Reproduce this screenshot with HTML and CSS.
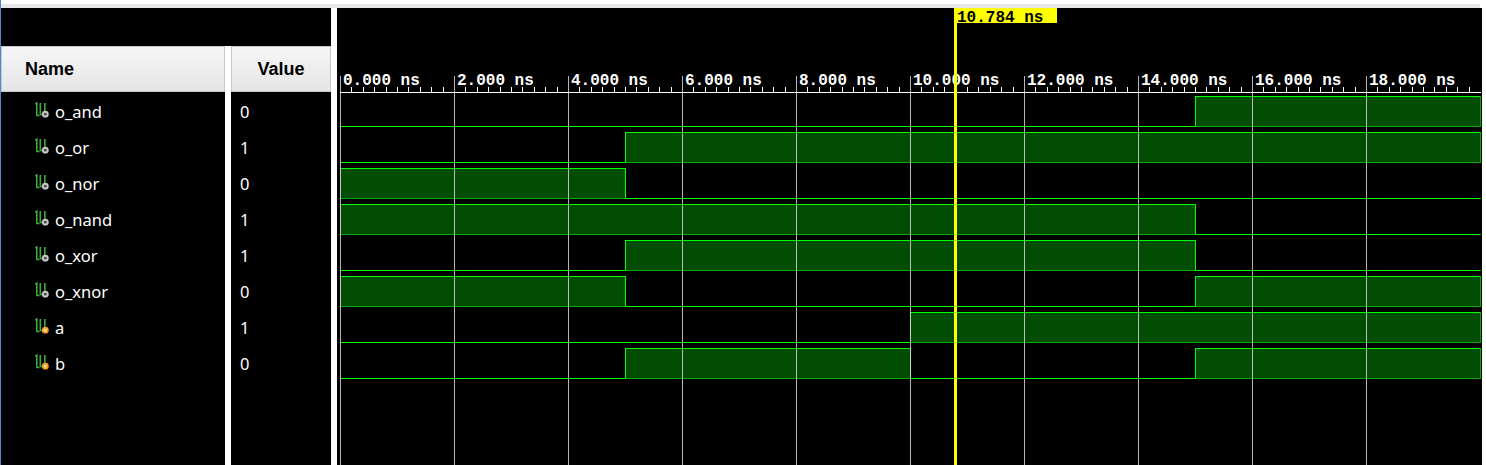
FILE: index.html
```html
<!DOCTYPE html>
<html>
<head>
<meta charset="utf-8">
<title>Waveform</title>
<link rel="stylesheet" href="styles.css">
</head>
<body>
<div class="app">
  <div class="topband"></div>
  <div class="main">
    <div class="names-panel">
      <div class="panel-top"></div>
      <div class="cols">
        <div class="col col-name">
          <div class="hdr">Name</div>
          <div class="row"><svg class="ico" viewBox="0 0 15 16" width="15" height="16"><path d="M0.3 2.3L1.8 1V13.5H4.5" class="ico-g"/><path d="M5.3 1V12.5H9.8V1" class="ico-g"/><circle cx="10.3" cy="12.2" r="3.4" class="ico-out"/><circle cx="10.3" cy="12.2" r="1.4" class="ico-dot"/></svg><span>o_and</span></div>
          <div class="row"><svg class="ico" viewBox="0 0 15 16" width="15" height="16"><path d="M0.3 2.3L1.8 1V13.5H4.5" class="ico-g"/><path d="M5.3 1V12.5H9.8V1" class="ico-g"/><circle cx="10.3" cy="12.2" r="3.4" class="ico-out"/><circle cx="10.3" cy="12.2" r="1.4" class="ico-dot"/></svg><span>o_or</span></div>
          <div class="row"><svg class="ico" viewBox="0 0 15 16" width="15" height="16"><path d="M0.3 2.3L1.8 1V13.5H4.5" class="ico-g"/><path d="M5.3 1V12.5H9.8V1" class="ico-g"/><circle cx="10.3" cy="12.2" r="3.4" class="ico-out"/><circle cx="10.3" cy="12.2" r="1.4" class="ico-dot"/></svg><span>o_nor</span></div>
          <div class="row"><svg class="ico" viewBox="0 0 15 16" width="15" height="16"><path d="M0.3 2.3L1.8 1V13.5H4.5" class="ico-g"/><path d="M5.3 1V12.5H9.8V1" class="ico-g"/><circle cx="10.3" cy="12.2" r="3.4" class="ico-out"/><circle cx="10.3" cy="12.2" r="1.4" class="ico-dot"/></svg><span>o_nand</span></div>
          <div class="row"><svg class="ico" viewBox="0 0 15 16" width="15" height="16"><path d="M0.3 2.3L1.8 1V13.5H4.5" class="ico-g"/><path d="M5.3 1V12.5H9.8V1" class="ico-g"/><circle cx="10.3" cy="12.2" r="3.4" class="ico-out"/><circle cx="10.3" cy="12.2" r="1.4" class="ico-dot"/></svg><span>o_xor</span></div>
          <div class="row"><svg class="ico" viewBox="0 0 15 16" width="15" height="16"><path d="M0.3 2.3L1.8 1V13.5H4.5" class="ico-g"/><path d="M5.3 1V12.5H9.8V1" class="ico-g"/><circle cx="10.3" cy="12.2" r="3.4" class="ico-out"/><circle cx="10.3" cy="12.2" r="1.4" class="ico-dot"/></svg><span>o_xnor</span></div>
          <div class="row"><svg class="ico" viewBox="0 0 15 16" width="15" height="16"><path d="M0.3 2.3L1.8 1V13.5H4.5" class="ico-g"/><path d="M5.3 1V12.5H9.8V1" class="ico-g"/><circle cx="10.3" cy="12.2" r="3.4" class="ico-in"/><path d="M9.1 10.9L10.3 13.4L11.5 10.9" class="ico-v"/></svg><span>a</span></div>
          <div class="row"><svg class="ico" viewBox="0 0 15 16" width="15" height="16"><path d="M0.3 2.3L1.8 1V13.5H4.5" class="ico-g"/><path d="M5.3 1V12.5H9.8V1" class="ico-g"/><circle cx="10.3" cy="12.2" r="3.4" class="ico-in"/><path d="M9.1 10.9L10.3 13.4L11.5 10.9" class="ico-v"/></svg><span>b</span></div>
        </div>
        <div class="col col-value">
          <div class="hdr">Value</div>
          <div class="row">0</div>
          <div class="row">1</div>
          <div class="row">0</div>
          <div class="row">1</div>
          <div class="row">1</div>
          <div class="row">0</div>
          <div class="row">1</div>
          <div class="row">0</div>
        </div>
      </div>
    </div>
    <div class="divider"></div>
    <div class="wave">
      <svg class="wave-svg" width="1145" height="457" viewBox="337 8 1145 457">
        <g class="ruler-text">
          <text x="343" y="85">0.000 ns</text>
          <text x="457" y="85">2.000 ns</text>
          <text x="571" y="85">4.000 ns</text>
          <text x="685" y="85">6.000 ns</text>
          <text x="799" y="85">8.000 ns</text>
          <text x="913" y="85">10.000 ns</text>
          <text x="1027" y="85">12.000 ns</text>
          <text x="1141" y="85">14.000 ns</text>
          <text x="1255" y="85">16.000 ns</text>
          <text x="1369" y="85">18.000 ns</text>
        </g>
        <rect x="340" y="92" width="1141" height="1" class="ruler-line"/>
        <path class="minor" d="M351.5 87V92M363.5 87V92M374.5 87V92M386.5 87V92M397.5 87V92M408.5 87V92M420.5 87V92M431.5 87V92M443.5 87V92
        M465.5 87V92M477.5 87V92M488.5 87V92M500.5 87V92M511.5 87V92M522.5 87V92M534.5 87V92M545.5 87V92M557.5 87V92
        M579.5 87V92M591.5 87V92M602.5 87V92M614.5 87V92M625.5 87V92M636.5 87V92M648.5 87V92M659.5 87V92M671.5 87V92
        M693.5 87V92M705.5 87V92M716.5 87V92M728.5 87V92M739.5 87V92M750.5 87V92M762.5 87V92M773.5 87V92M785.5 87V92
        M807.5 87V92M819.5 87V92M830.5 87V92M842.5 87V92M853.5 87V92M864.5 87V92M876.5 87V92M887.5 87V92M899.5 87V92
        M921.5 87V92M933.5 87V92M944.5 87V92M956.5 87V92M967.5 87V92M978.5 87V92M990.5 87V92M1001.5 87V92M1013.5 87V92
        M1035.5 87V92M1047.5 87V92M1058.5 87V92M1070.5 87V92M1081.5 87V92M1092.5 87V92M1104.5 87V92M1115.5 87V92M1127.5 87V92
        M1149.5 87V92M1161.5 87V92M1172.5 87V92M1184.5 87V92M1195.5 87V92M1206.5 87V92M1218.5 87V92M1229.5 87V92M1241.5 87V92
        M1263.5 87V92M1275.5 87V92M1286.5 87V92M1298.5 87V92M1309.5 87V92M1320.5 87V92M1332.5 87V92M1343.5 87V92M1355.5 87V92
        M1377.5 87V92M1389.5 87V92M1400.5 87V92M1412.5 87V92M1423.5 87V92M1434.5 87V92M1446.5 87V92M1457.5 87V92M1469.5 87V92"/>

        <g class="hi">
          <rect x="1195.5" y="96.5" width="285" height="30"/>
          <rect x="625.5" y="132.5" width="855" height="30"/>
          <rect x="340.5" y="168.5" width="285" height="30"/>
          <rect x="340.5" y="204.5" width="855" height="30"/>
          <rect x="625.5" y="240.5" width="570" height="30"/>
          <rect x="340.5" y="276.5" width="285" height="30"/>
          <rect x="1195.5" y="276.5" width="285" height="30"/>
          <rect x="910.5" y="312.5" width="570" height="30"/>
          <rect x="625.5" y="348.5" width="285" height="30"/>
          <rect x="1195.5" y="348.5" width="285" height="30"/>
        </g>
        <g class="trace">
          <path d="M340.5 126.5H1195.5V96.5H1480.5"/>
          <path d="M340.5 162.5H625.5V132.5H1480.5"/>
          <path d="M340.5 168.5H625.5V198.5H1480.5"/>
          <path d="M340.5 204.5H1195.5V234.5H1480.5"/>
          <path d="M340.5 270.5H625.5V240.5H1195.5V270.5H1480.5"/>
          <path d="M340.5 276.5H625.5V306.5H1195.5V276.5H1480.5"/>
          <path d="M340.5 342.5H910.5V312.5H1480.5"/>
          <path d="M340.5 378.5H625.5V348.5H910.5V378.5H1195.5V348.5H1480.5"/>
        </g>
        <path class="grid" d="M340.5 76V465M454.5 76V465M568.5 76V465M682.5 76V465M796.5 76V465M910.5 76V465M1024.5 76V465M1138.5 76V465M1252.5 76V465M1366.5 76V465"/>
        <rect x="954" y="8" width="3" height="457" class="cursor"/>
        <rect x="955" y="8" width="102" height="15" class="cursor"/>
        <text x="957" y="22" class="cursor-text">10.784 ns</text>
      </svg>
    </div>
  </div>
</div>
</body>
</html>
```

FILE: styles.css
```css
html, body {
  margin: 0;
  padding: 0;
  background: #ffffff;
}

.app {
  width: 1486px;
  height: 465px;
  box-sizing: border-box;
  border-left: 1px solid #4f86d6;
  background: #ffffff;
  display: flex;
  flex-direction: column;
  overflow: hidden;
}

.topband {
  height: 4px;
  margin-top: 4px;
  margin-right: 6px;
  background: #e6e6e6;
  flex: none;
}

.main {
  display: flex;
  height: 457px;
  flex: none;
}

.names-panel {
  width: 330px;
  display: flex;
  flex-direction: column;
  background: #000000;
  flex: none;
}

.panel-top {
  height: 38px;
  flex: none;
}

.cols {
  flex: 1;
  display: flex;
  gap: 6px;
  background: #ffffff;
}

.col {
  background: #000000;
  display: flex;
  flex-direction: column;
}

.col-name {
  width: 224px;
}

.col-value {
  width: 100px;
}

.hdr {
  height: 46px;
  box-sizing: border-box;
  border: 1px solid #c9c9c9;
  background: linear-gradient(#f6f6f6, #e5e5e5);
  font-family: "Liberation Sans", Arial, sans-serif;
  font-weight: bold;
  font-size: 18px;
  color: #000000;
  display: flex;
  align-items: center;
  flex: none;
}

.col-name .hdr {
  padding-left: 23px;
}

.col-value .hdr {
  justify-content: center;
}

.row {
  height: 36px;
  box-sizing: border-box;
  padding-top: 4px;
  display: flex;
  align-items: center;
  color: #ffffff;
  font-family: "Noto Sans", "Open Sans", sans-serif;
  font-size: 16.5px;
  line-height: 20px;
  flex: none;
}

.col-name .row {
  padding-left: 34px;
}

.col-value .row {
  padding-left: 9px;
}

.ico {
  flex: none;
  margin-right: 5px;
  margin-bottom: 4px;
}

.ico-g {
  fill: none;
  stroke: #3aa83c;
  stroke-width: 1.6;
}

.ico-out {
  fill: #c6c6c6;
}

.ico-dot {
  fill: #4e4e4e;
}

.ico-in {
  fill: #f5a020;
}

.ico-v {
  fill: none;
  stroke: #ffffff;
  stroke-width: 1;
}

.divider {
  width: 6px;
  background: #ffffff;
  flex: none;
}

.wave {
  width: 1145px;
  background: #000000;
  flex: none;
}

.wave-svg {
  display: block;
}

.ruler-text text {
  font-family: "Liberation Mono", "Courier New", monospace;
  font-weight: bold;
  font-size: 16px;
  fill: #ffffff;
}

.ruler-line {
  fill: #ffffff;
}

.minor {
  stroke: #ffffff;
  stroke-width: 1;
  fill: none;
}

.hi rect {
  fill: #034c03;
  stroke: #00a800;
  stroke-width: 1;
}

.trace path {
  fill: none;
  stroke: #00ff00;
  stroke-width: 1;
}

.grid {
  stroke: rgba(215, 215, 215, 0.85);
  stroke-width: 1;
  fill: none;
}

.cursor {
  fill: #ffff00;
}

.cursor-text {
  font-family: "Liberation Mono", "Courier New", monospace;
  font-weight: bold;
  font-size: 16px;
  fill: #000000;
}
```
